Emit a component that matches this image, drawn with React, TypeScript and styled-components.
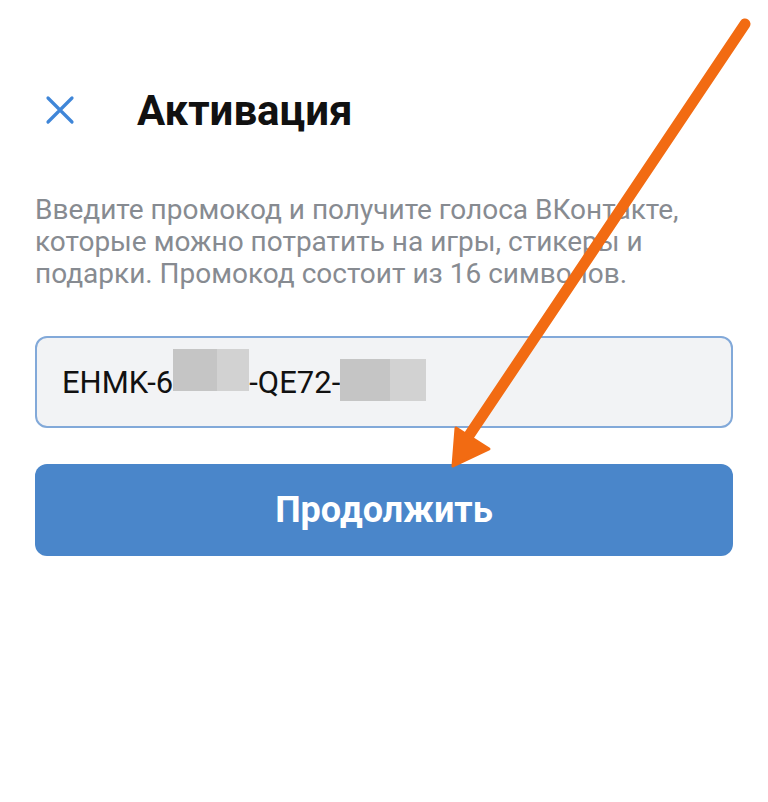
import React from "react";
import styled, { createGlobalStyle } from "styled-components";

const GlobalStyle = createGlobalStyle`
  body {
    margin: 0;
    background: #fff;
    font-family: Roboto, "Noto Sans", sans-serif;
  }
`;

const Page = styled.div`
  position: relative;
  width: 768px;
  height: 802px;
  overflow: hidden;
  background: #fff;
`;

const Header = styled.div`
  display: flex;
  align-items: center;
  height: 80px;
  margin-top: 70px;
  padding-left: 44px;
  gap: 61px;
`;

const CloseButton = styled.button`
  display: flex;
  align-items: center;
  justify-content: center;
  width: 32px;
  height: 32px;
  padding: 0;
  border: none;
  background: none;
`;

const Title = styled.h1`
  margin: 0;
  font-size: 42px;
  font-weight: 700;
  color: #111;
`;

const Content = styled.div`
  display: flex;
  flex-direction: column;
  padding: 44px 35px 0;
`;

const Hint = styled.p`
  margin: 0;
  font-size: 28px;
  line-height: 32px;
  color: #878b91;
`;

const CodeField = styled.div`
  display: flex;
  align-items: center;
  height: 88px;
  margin-top: 46px;
  padding-left: 25px;
  border: 2px solid #82a9d9;
  border-radius: 12px;
  background: #f2f3f5;
  font-size: 31px;
  color: #111;
`;

const Masked = styled.span<{ $shift: number; $width: number }>`
  display: inline-flex;
  width: ${(p) => p.$width}px;
  height: 42px;
  transform: translateY(${(p) => p.$shift}px);
  background: linear-gradient(90deg, #c5c5c5 0 58%, #d2d2d2 58% 100%);
`;

const Continue = styled.button`
  height: 92px;
  margin-top: 36px;
  border: none;
  border-radius: 12px;
  background: #4a86ca;
  color: #fff;
  font-family: Roboto, "Noto Sans", sans-serif;
  font-size: 36px;
  font-weight: 700;
`;

const ArrowLayer = styled.svg`
  position: absolute;
  left: 0;
  top: 0;
  pointer-events: none;
`;

export default function App() {
  return (
    <Page>
      <GlobalStyle />
      <Header>
        <CloseButton aria-label="close">
          <svg width="30" height="30" viewBox="0 0 30 30">
            <path
              d="M3 3L27 27M27 3L3 27"
              stroke="#3f86d8"
              strokeWidth="3.2"
              strokeLinecap="round"
            />
          </svg>
        </CloseButton>
        <Title>Активация</Title>
      </Header>
      <Content>
        <Hint>
          Введите промокод и получите голоса ВКонтакте,
          <br />
          которые можно потратить на игры, стикеры и
          <br />
          подарки. Промокод состоит из 16 символов.
        </Hint>
        <CodeField>
          EHMK-6
          <Masked $width={76} $shift={-12} />
          -QE72-
          <Masked $width={86} $shift={-2} />
        </CodeField>
        <Continue>Продолжить</Continue>
      </Content>
      <ArrowLayer width="768" height="802" viewBox="0 0 768 802">
        <line
          x1="745"
          y1="24"
          x2="466"
          y2="440"
          stroke="#f26b12"
          strokeWidth="11"
          strokeLinecap="round"
        />
        <path d="M453 466L456 428L489 449Z" fill="#f26b12" stroke="#f26b12" strokeWidth="3" strokeLinejoin="round" />
      </ArrowLayer>
    </Page>
  );
}
